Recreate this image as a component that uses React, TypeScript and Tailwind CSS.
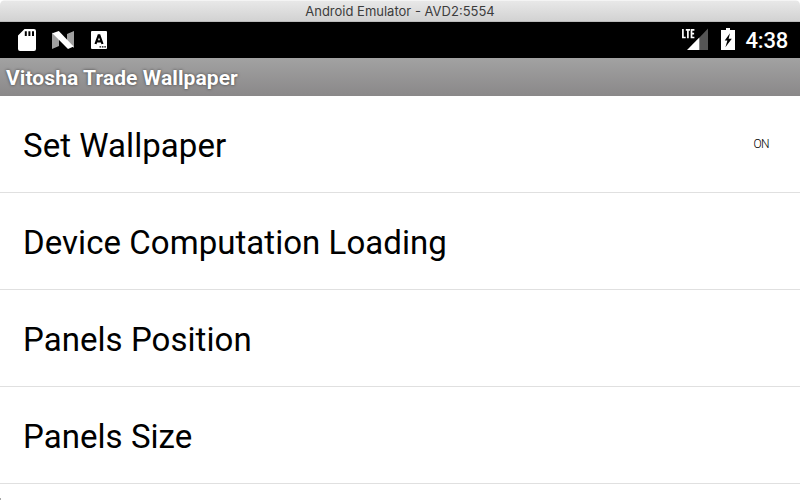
export default function App() {
  const rows = [
    { label: "Set Wallpaper", value: "ON" },
    { label: "Device Computation Loading" },
    { label: "Panels Position" },
    { label: "Panels Size" },
  ];
  return (
    <div className="h-[500px] w-[800px] bg-white">
      <div className="flex h-[500px] w-[800px] flex-col overflow-hidden rounded-t-[5px] bg-white font-['Roboto',sans-serif]">
        <div className="flex h-[22px] shrink-0 items-center justify-center border-t border-b border-t-[#f4f4f4] border-b-[#bcbcbc] bg-linear-to-b from-[#e8e8e8] to-[#d2d2d2] pt-[2px] font-['Inter',sans-serif] text-[13px] text-[#3c3c3c]">
          <span>Android Emulator - AVD2:5554</span>
        </div>
        <div className="flex h-9 shrink-0 items-center justify-between bg-black text-white">
          <svg width="120" height="36" viewBox="0 0 120 36" fill="#fff">
            <path
              fillRule="evenodd"
              d="M24.5 7H34a2 2 0 0 1 2 2v18a2 2 0 0 1-2 2H20a2 2 0 0 1-2-2V13.5zM24.8 9.3v4.7h2V9.3zm3.6 0v4.7h2V9.3zm3.6 0v4.7h2V9.3z"
            />
            <path fill="#a0a0a0" d="M52 10.5l7 6v7.5L52 27zM67 12l7-3v17l-7-6z" />
            <path d="M52.4 11.3L58.8 9 73.6 24.6 68 27z" />
            <rect x="91" y="9" width="16" height="18" rx="1" />
            <path
              fill="none"
              stroke="#000"
              strokeWidth="2.2"
              d="M95.5 22l3.1-8.7h.8l3.1 8.7M96.5 19.3h5"
            />
            <path stroke="#000" strokeWidth="1.3" strokeDasharray="1.6 0.8" d="M99.5 24.8h6.5" />
          </svg>
          <div className="flex h-9 items-center pr-[12px]">
            <svg width="65" height="36" viewBox="0 0 65 36" fill="#fff">
              <path
                fill="none"
                stroke="#fff"
                strokeWidth="1.7"
                d="M2.9 7v8.5h2.8M5.8 7.9h4.2M7.9 7.9v8.4M14.4 7.9h-2.9v7.6h2.9M11.5 11.6h2.6"
              />
              <path fill="#555" d="M28 6.5V28h-9V16z" />
              <path d="M19.3 15.5V28H7z" />
              <path d="M46 6h4v2h5v20H41V8h5z" />
              <path fill="#000" d="M50 11.2L44.7 18.6h2.7L45.4 25.2 51.8 16.7h-3.2z" />
            </svg>
            <span className="pt-[1px] text-[22px] font-medium tracking-[-0.2px]">4:38</span>
          </div>
        </div>
        <div className="flex h-[38px] shrink-0 items-center bg-linear-to-b from-[#a2a2a2] to-[#8a8889] pt-[3px] pl-1.5 text-[21px] font-bold tracking-[0.08px] text-white [text-shadow:0_0_3px_rgba(0,0,0,0.6)]">
          Vitosha Trade Wallpaper
        </div>
        {rows.map((row) => (
          <div
            key={row.label}
            className="flex h-[97px] shrink-0 items-center justify-between border-b border-[#e0e0e0] pt-[1px] pr-[31px] pl-[23px] text-black"
          >
            <span className="pt-[3px] text-[33px] tracking-[0.05px]">{row.label}</span>
            {row.value && (
              <span className="pb-[1px] text-[12px] font-light tracking-[-0.6px]">{row.value}</span>
            )}
          </div>
        ))}
        <div className="mt-auto h-[2px] w-px shrink-0 bg-[#a8a8a8]" />
      </div>
    </div>
  );
}
